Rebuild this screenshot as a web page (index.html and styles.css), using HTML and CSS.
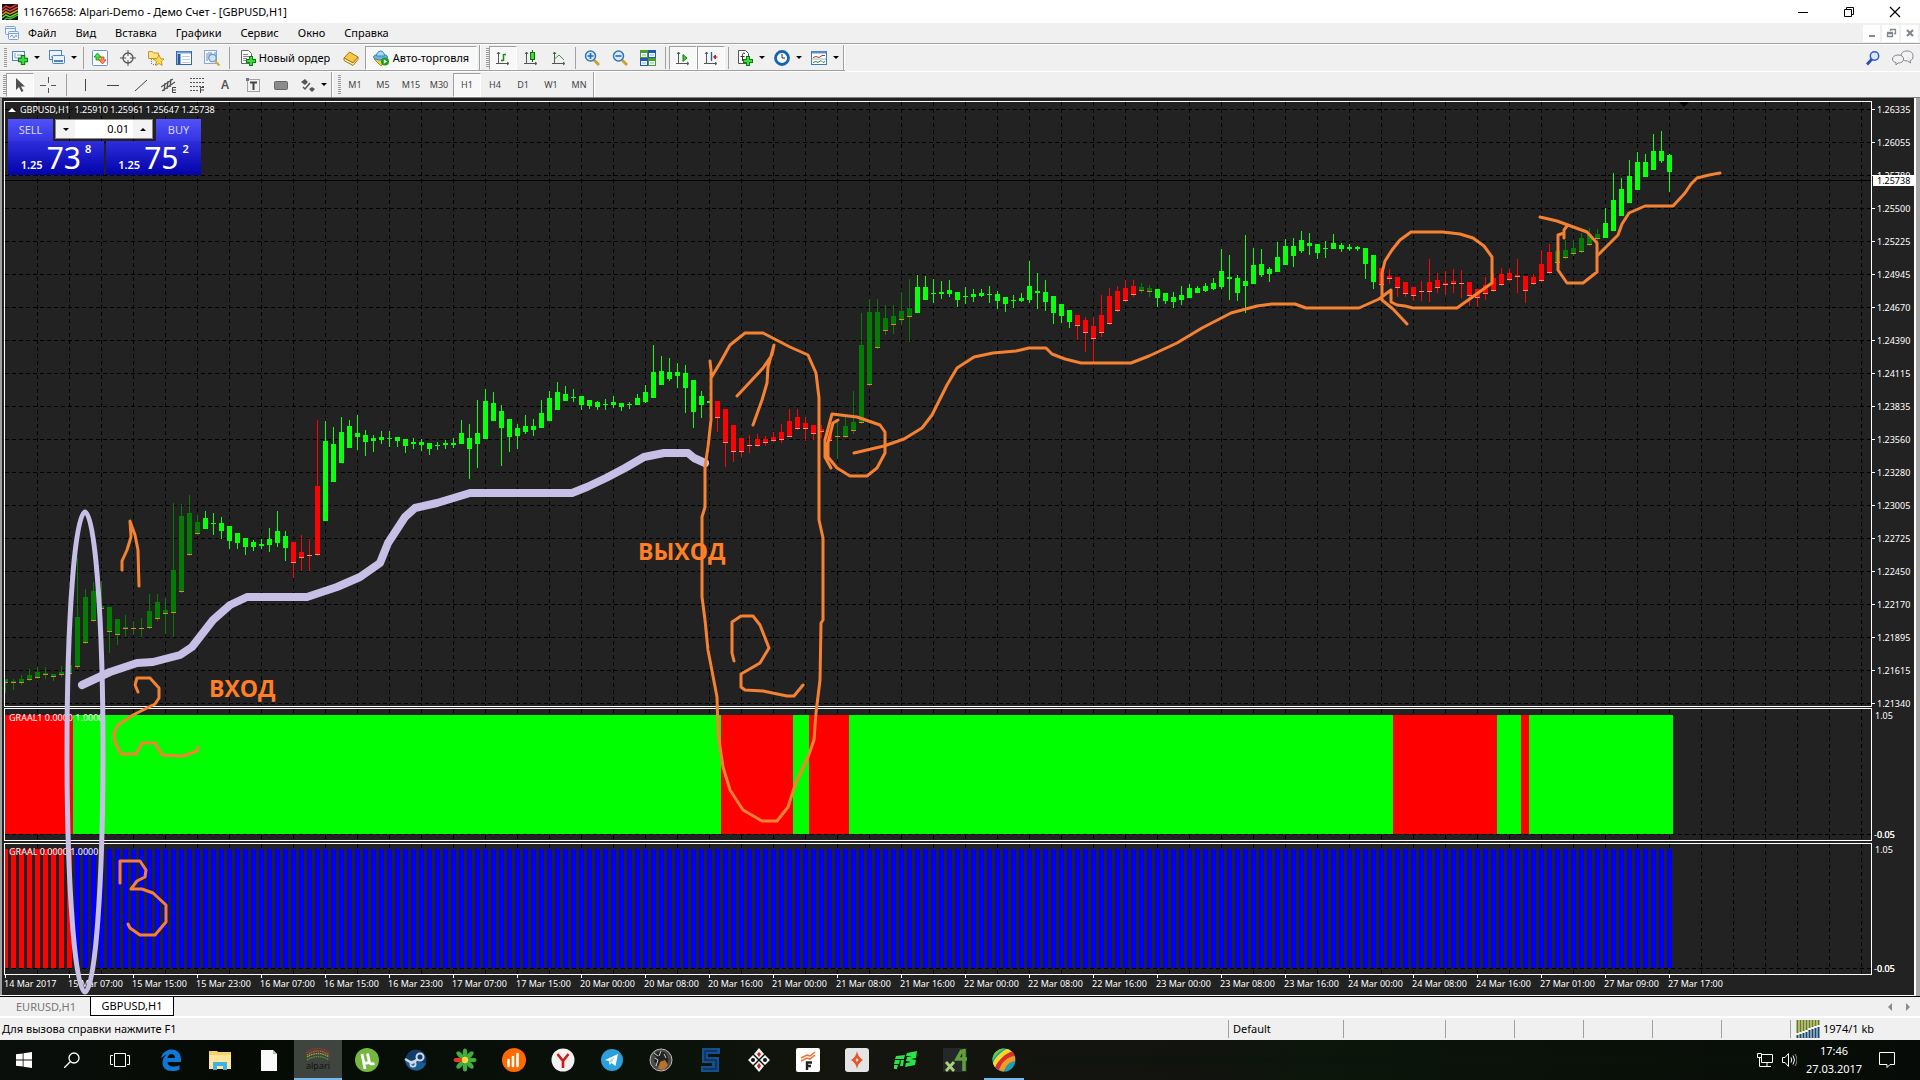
FILE: index.html
```html
<!DOCTYPE html>
<html lang="ru">
<head>
<meta charset="utf-8">
<title>11676658: Alpari-Demo - Демо Счет - [GBPUSD,H1]</title>
<link rel="stylesheet" href="styles.css">
</head>
<body>
<div class="app">
  <header class="titlebar">
    <svg class="ic" viewBox="0 0 16 16"><rect width="16" height="16" fill="#111"/><g fill="none" stroke-width="1.5"><path d="M0 5l4-3 4 2 4-2 4-2" stroke="#c33"/><path d="M0 8l4-3 4 2 4-2 4-2" stroke="#d44"/><path d="M0 11l4-3 4 2 4-2 4-2" stroke="#c90"/><path d="M0 14l4-3 4 2 4-2 4-2" stroke="#6c3"/><path d="M2 16l3-2 3 1 4-2 4-2" stroke="#3b3"/></g></svg>
    <h1 class="title">11676658: Alpari-Demo - Демо Счет - [GBPUSD,H1]</h1>
    <div class="winbtns">
      <button class="winbtn" aria-label="Свернуть"><svg class="ic" viewBox="0 0 16 16"><path d="M3 8.500h10" stroke="#000"/></svg></button>
      <button class="winbtn" aria-label="Развернуть"><svg class="ic" viewBox="0 0 16 16"><path d="M3.500 5.500h7v7h-7zM5.500 5V3.500h7v7H11" fill="none" stroke="#000"/></svg></button>
      <button class="winbtn" aria-label="Закрыть"><svg class="ic" viewBox="0 0 16 16"><path d="M3 3l10 10M13 3L3 13" stroke="#000" stroke-width="1.200"/></svg></button>
    </div>
  </header>

  <nav class="menubar">
    <svg class="ic" viewBox="0 0 16 16"><g fill="#eef5fd" stroke="#7fa3cc"><rect x="1.500" y="1.500" width="10" height="8" rx="1"/><path d="M2 3.500h9"/><rect x="4.500" y="6.500" width="10" height="8" rx="1"/><path d="M5 8.500h9M6 12l2-2 2 3 2-3 1 2"/></g></svg>
    <a href="#">Файл</a><a href="#">Вид</a><a href="#">Вставка</a><a href="#">Графики</a><a href="#">Сервис</a><a href="#">Окно</a><a href="#">Справка</a>
    <div class="mdibtns">
      <button class="mdibtn" aria-label="Свернуть окно"><svg class="ic" viewBox="0 0 16 16"><path d="M5 11h6" stroke="#7d8894" stroke-width="2"/></svg></button>
      <button class="mdibtn" aria-label="Восстановить окно"><svg class="ic" viewBox="0 0 16 16"><path d="M4.500 8.500h5v3h-5zM4 7.500h6M7.500 6V4.500h5v4H11M7 4.500h6" fill="none" stroke="#7d8894" stroke-width="1.300"/></svg></button>
      <button class="mdibtn" aria-label="Закрыть окно"><svg class="ic" viewBox="0 0 16 16"><path d="M5 5l6 6M11 5l-6 6" stroke="#7d8894" stroke-width="2.200"/></svg></button>
    </div>
  </nav>

  <div class="toolrow">
    <div class="toolbar upper">
      <span class="grip"></span>
      <button class="tool split" aria-label="Новый график"><svg class="ic" viewBox="0 0 16 16"><rect x=".5" y="1.500" width="12" height="9" fill="#f4f9fe" stroke="#4f83b9"/><path d="M3 3v5h7M5 5h5" stroke="#7ea5cd" fill="none"/><path d="M11 5v10M6 10h10" stroke="#0b7a12" stroke-width="4.500"/><path d="M11 6v8M7 10h8" stroke="#3bdc3b" stroke-width="2.500"/></svg><i class="drop"></i></button>
      <button class="tool split" aria-label="Профили"><svg class="ic" viewBox="0 0 16 16"><g fill="#eaf3fc" stroke="#4f83b9"><rect x=".5" y=".5" width="12" height="9"/><path d="M2 7h10"/><rect x="3.500" y="5.500" width="12" height="8" rx="1"/><path d="M5 11h9" stroke-width="2"/></g></svg><i class="drop"></i></button>
      <span class="sep thin"></span>
      <button class="tool" aria-label="Обзор рынка"><svg class="ic" viewBox="0 0 16 16"><rect x=".5" y=".5" width="15" height="15" rx="1" fill="#fff" stroke="#6b9ac9"/><path d="M5.500 3L9 7H7v3H4V7H2z" fill="#4ae04a" stroke="#138a13" stroke-width=".8"/><path d="M10.500 14L14 10h-2V7H9v3H7z" fill="#ff9050" stroke="#d24010" stroke-width=".8"/></svg></button>
      <button class="tool" aria-label="Окно данных"><svg class="ic" viewBox="0 0 16 16"><circle cx="8" cy="8" r="5" fill="none" stroke="#555" stroke-width="1.300"/><path d="M8 0v6M8 10v6M0 8h6M10 8h6" stroke="#555"/></svg></button>
      <button class="tool" aria-label="Навигатор"><svg class="ic" viewBox="0 0 16 16"><path d="M.5 8.500v-7h4l1 1.500h5v5.500z" fill="#ffe187" stroke="#c59a27"/><path d="M3.500 9v6M5 14.500h3" stroke="#777" stroke-dasharray="1 1"/><path d="M11 5l1.600 3.600 3.400.4-2.600 2.500.8 4-3.200-2-3.200 2 .8-4L5 9l4-.4z" fill="#ffd84a" stroke="#b98a12" stroke-width=".8"/></svg></button>
      <button class="tool" aria-label="Терминал"><svg class="ic" viewBox="0 0 16 16"><rect x=".5" y="1.500" width="15" height="13" fill="#fff" stroke="#33689f"/><path d="M1 2.500h14" stroke="#6fa0d4" stroke-width="2"/><path d="M3 4v10" stroke="#1f5aa5" stroke-width="3"/><path d="M6 6.500h8M6 9.500h8M6 12.500h8" stroke="#b9cfe6"/></svg></button>
      <button class="tool" aria-label="Тестер стратегий"><svg class="ic" viewBox="0 0 16 16"><rect x=".5" y=".5" width="12" height="13" fill="#f4f8fd" stroke="#86aad0"/><path d="M3 11V3M5 9V2M7 5V2M11 8V2" stroke="#6c8fb5"/><circle cx="8.500" cy="8" r="3.700" fill="#cfe4f8" stroke="#6a94c0" stroke-width="1.200"/><path d="M11 11l4.500 4.500" stroke="#d8a930" stroke-width="2.200"/></svg></button>
      <span class="sep"></span>
      <button class="tool order"><svg class="ic" viewBox="0 0 16 16"><path d="M1.500.5h7l3 3v10h-10z" fill="#fff" stroke="#666"/><path d="M3 4.500h5M3 6.500h7M3 8.500h4M3 10.500h3" stroke="#888"/><path d="M11 6v10M6 11h10" stroke="#0b7a12" stroke-width="4"/><path d="M11 7v8M7 11h8" stroke="#3bdc3b" stroke-width="2.200"/></svg>Новый ордер</button>
      <button class="tool" aria-label="MetaEditor"><svg class="ic" viewBox="0 0 16 16"><path d="M6.500 2L15 7l-5 6-9-5z" fill="#f5c945" stroke="#a87410"/><path d="M1 8l9 5 5-6v2.500L10 15.500 1 10.500z" fill="#fff3c0" stroke="#a87410"/></svg></button>
      <button class="tool pressed auto"><svg class="ic" viewBox="0 0 16 16"><path d="M1 9h13l-6 7z" fill="#f0cc50" stroke="#b58f20"/><ellipse cx="7.500" cy="7" rx="7" ry="3" fill="#6bb5e0" stroke="#3b84b5"/><path d="M3.500 6a4 5 0 0 1 8 0z" fill="#a6d8f2" stroke="#3b84b5"/><circle cx="12" cy="11.500" r="4" fill="#18a018"/><path d="M10.800 9.300l3.400 2.200-3.400 2.200z" fill="#fff"/></svg>Авто-торговля</button>
      <span class="edge"></span>
      <span class="grip"></span>
      <button class="tool pressed" aria-label="Бары"><svg class="ic" viewBox="0 0 16 16"><path d="M3.500 2v12M1 13.500h12M2 4l1.500-2L5 4M12 12l2 1.500-2 1.500" stroke="#555" fill="none"/><path d="M8.500 4v7M8.500 4.500H11M6 10.500h2.500" stroke="#159015" stroke-width="1.500"/></svg></button>
      <button class="tool" aria-label="Японские свечи"><svg class="ic" viewBox="0 0 16 16"><path d="M3.500 2v12M1 13.500h12M2 4l1.500-2L5 4M12 12l2 1.500-2 1.500" stroke="#555" fill="none"/><path d="M9.500 0v12" stroke="#107010"/><rect x="7.500" y="2.500" width="4" height="7" fill="#39e039" stroke="#107010"/></svg></button>
      <button class="tool" aria-label="Линия"><svg class="ic" viewBox="0 0 16 16"><path d="M3.500 2v12M1 13.500h12M2 4l1.500-2L5 4M12 12l2 1.500-2 1.500" stroke="#555" fill="none"/><path d="M3.500 9L8 5l5 5" stroke="#469146" fill="none"/></svg></button>
      <span class="sep thin"></span>
      <button class="tool" aria-label="Увеличить"><svg class="ic" viewBox="0 0 16 16"><path d="M10 10l5 5" stroke="#cda02c" stroke-width="2.800"/><circle cx="6.500" cy="6" r="5" fill="#d9ecfb" stroke="#3374b8" stroke-width="1.500"/><path d="M3.500 6h6M6.500 3v6" stroke="#1f6cc0" stroke-width="1.600"/></svg></button>
      <button class="tool" aria-label="Уменьшить"><svg class="ic" viewBox="0 0 16 16"><path d="M10 10l5 5" stroke="#cda02c" stroke-width="2.800"/><circle cx="6.500" cy="6" r="5" fill="#d9ecfb" stroke="#3374b8" stroke-width="1.500"/><path d="M3.500 6h6" stroke="#1f6cc0" stroke-width="1.600"/></svg></button>
      <button class="tool" aria-label="Расположить окна"><svg class="ic" viewBox="0 0 16 16"><path d="M0 0h8v8H0zM8 8h8v8H8z" fill="#46a028"/><path d="M8 0h8v8H8zM0 8h8v8H0z" fill="#2456b8"/><path d="M1 3h6v4H1zM9 3h6v4H9zM1 11h6v4H1zM9 11h6v4H9z" fill="#f4f8ff"/><path d="M2 5h4M10 5h4M2 13h4M10 13h4" stroke="#8ab0c8"/></svg></button>
      <span class="sep"></span>
      <button class="tool pressed" aria-label="Автопрокрутка"><svg class="ic" viewBox="0 0 16 16"><path d="M3.500 2v12M1 13.500h12M2 4l1.500-2L5 4M12 12l2 1.500-2 1.500" stroke="#555" fill="none"/><path d="M8 4.500l4 3.500-4 3.500z" fill="#4c4" stroke="#178017"/></svg></button>
      <button class="tool pressed" aria-label="Сдвиг графика"><svg class="ic" viewBox="0 0 16 16"><path d="M3.500 2v12M1 13.500h12M2 4l1.500-2L5 4M12 12l2 1.500-2 1.500" stroke="#555" fill="none"/><path d="M8.500 2v9" stroke="#25629c" stroke-width="1.400"/><path d="M14.500 7H11M12.500 5l-2 2 2 2z" fill="#b22" stroke="#b22"/></svg></button>
      <span class="sep"></span>
      <button class="tool split" aria-label="Индикаторы"><svg class="ic" viewBox="0 0 16 16"><path d="M1.500.5h7l3 3v10h-10z" fill="#fff" stroke="#555"/><path d="M8 3.500c-2-1-2.500 0-2.500 2V11M3.500 6.500h4" stroke="#333" fill="none"/><path d="M11 6v10M6 11h10" stroke="#0b7a12" stroke-width="4"/><path d="M11 7v8M7 11h8" stroke="#3bdc3b" stroke-width="2.200"/></svg><i class="drop"></i></button>
      <button class="tool split" aria-label="Периоды"><svg class="ic" viewBox="0 0 16 16"><circle cx="8" cy="8" r="6.500" fill="#f4faff" stroke="#1764ae" stroke-width="2.800"/><path d="M8 4v4h3" stroke="#333" fill="none"/></svg><i class="drop"></i></button>
      <button class="tool split" aria-label="Шаблоны"><svg class="ic" viewBox="0 0 16 16"><rect x=".5" y="1.500" width="15" height="13" fill="#fff" stroke="#3f78b0"/><path d="M1 2.500h14" stroke="#5a93cc" stroke-width="2"/><path d="M2 7.500l3-1 3 1 3-2 3 0" stroke="#a33" fill="none"/><path d="M1 9h14" stroke="#9bb"/><path d="M2 12.500l3-1 2 1 3-2 2 2 2-1" stroke="#2a8a3a" fill="none"/></svg><i class="drop"></i></button>
      <span class="edge"></span>
    </div>
    <div class="tray-tools">
      <button class="tool" aria-label="Поиск"><svg class="ic" viewBox="0 0 16 16"><path d="M7 9l-5 5.500" stroke="#2451b5" stroke-width="2.800"/><circle cx="9.500" cy="6" r="4.200" fill="#dbe8fb" stroke="#2c5cc4" stroke-width="1.500"/></svg></button>
      <button class="tool chat" aria-label="Чат"><svg class="icw" viewBox="0 0 22 16"><g fill="#f2f2f4" stroke="#85858c"><path d="M15 1c4 0 6 2 6 5s-1 4-3 4.500l.5 2.500-3-2c-4 0-6.500-2-6.500-5s2-5 6-5z"/><path d="M6 5c3.500 0 5.500 1.500 5.500 4S9.500 13 6 13l-2 2v-2.500C1.500 12 .5 11 .5 9S2.500 5 6 5z"/></g></svg></button>
    </div>
  </div>

  <div class="toolrow short">
    <div class="toolbar lower">
      <span class="grip"></span>
      <button class="tool pressed" aria-label="Курсор"><svg class="ic" viewBox="0 0 16 16"><path d="M4 1v12l3-3 2.500 5 2-1L9 9.500h4z" fill="#505050"/></svg></button>
      <button class="tool" aria-label="Перекрестие"><svg class="ic" viewBox="0 0 16 16"><path d="M8.500 0v6M8.500 11v5M0 8.500h6M11 8.500h5" stroke="#555"/></svg></button>
      <span class="sep"></span>
      <button class="tool" aria-label="Вертикальная линия"><svg class="ic" viewBox="0 0 16 16"><path d="M8.500 2v12" stroke="#444"/></svg></button>
      <button class="tool" aria-label="Горизонтальная линия"><svg class="ic" viewBox="0 0 16 16"><path d="M2 8.500h12" stroke="#444"/></svg></button>
      <button class="tool" aria-label="Трендовая линия"><svg class="ic" viewBox="0 0 16 16"><path d="M2 14L14 3" stroke="#444"/></svg></button>
      <button class="tool" aria-label="Канал"><svg class="ic" viewBox="0 0 16 16"><path d="M0 10L12 2M1 14L14 5M4 6l-1 8M7 4L6 12M10 2L9 10" stroke="#555" stroke-width="1.300"/><path d="M15 10.500h-3.500v5H15M12 13h3" stroke="#444" fill="none"/></svg></button>
      <button class="tool" aria-label="Фибоначчи"><svg class="ic" viewBox="0 0 16 16"><path d="M1 1.500h14M1 5.500h14M1 9.500h14M1 13.500h8" stroke="#555" stroke-dasharray="2 1"/><path d="M15 10.500h-3.500V16M12 13h3" stroke="#444" fill="none"/></svg></button>
      <button class="tool glyph">A</button>
      <button class="tool" aria-label="Текстовая метка"><svg class="ic" viewBox="0 0 16 16"><rect x="2.500" y="2.500" width="12" height="12" fill="none" stroke="#555" stroke-dasharray="1 1"/><path d="M1 1h3v3H1z" fill="#777"/><path d="M5 5.500h7M8.500 5v8" stroke="#444" stroke-width="2"/></svg></button>
      <button class="tool" aria-label="Фигуры"><svg class="ic" viewBox="0 0 16 16"><rect x="1.500" y="4.500" width="13" height="8" rx="1" fill="#8b8b8b" stroke="#666"/></svg></button>
      <button class="tool arrows" aria-label="Стрелки"><svg class="ic" viewBox="0 0 16 16"><path d="M1 5l4-3 3 3-3 3zM9 12l3-2 3 2-3 3z" fill="#555"/><path d="M3 10l2 2 5-6" stroke="#555" stroke-width="1.500" fill="none"/></svg><i class="drop"></i></button>
      <span class="edge"></span>
      <span class="grip"></span>
      <button class="tool tf">M1</button><button class="tool tf">M5</button><button class="tool tf">M15</button><button class="tool tf">M30</button><button class="tool tf pressed">H1</button><button class="tool tf">H4</button><button class="tool tf">D1</button><button class="tool tf">W1</button><button class="tool tf">MN</button>
      <span class="edge"></span>
    </div>
  </div>

  <main class="chart">
    <svg id="plot" class="plot" viewBox="0 97 1920 900" preserveAspectRatio="xMinYMin meet" role="img" aria-label="GBPUSD,H1"></svg>
    <section class="ticket" aria-label="Торговля одним кликом">
      <button class="quote sell"><span class="side">SELL</span><span class="price"><small>1.25</small><big>73</big><sup>8</sup></span></button>
      <button class="quote buy"><span class="side">BUY</span><span class="price"><small>1.25</small><big>75</big><sup>2</sup></span></button>
      <div class="volume">
        <button class="step" aria-label="Меньше"><i class="drop"></i></button>
        <input class="lots" aria-label="Объем" value="0.01">
        <button class="step" aria-label="Больше"><i class="drop up"></i></button>
      </div>
    </section>
  </main>

  <div class="tabs">
    <button class="tab">EURUSD,H1</button>
    <button class="tab active">GBPUSD,H1</button>
    <div class="scrollers">
      <button class="scroller" aria-label="Влево"><svg viewBox="0 0 8 10"><path d="M6 1v8L2 5z" fill="#8b8b8b"/></svg></button>
      <button class="scroller" aria-label="Вправо"><svg viewBox="0 0 8 10"><path d="M2 1v8l4-4z" fill="#8b8b8b"/></svg></button>
    </div>
  </div>

  <footer class="status">
    <span class="hint">Для вызова справки нажмите F1</span>
    <span class="cell c-profile">Default</span>
    <span class="cell c-wide"></span>
    <span class="cell"></span>
    <span class="cell"></span>
    <span class="cell"></span>
    <span class="cell"></span>
    <span class="cell"></span>
    <span class="cell c-net"><svg class="net" viewBox="0 0 24 18"><path d="M1.500 0v13M4.500 0v12M7.500 0v11M10.500 0v10M13.500 0v8M16.500 0v7M19.500 0v6M22.500 0v5" stroke="#6b7d10" stroke-width="2"/><path d="M1.500 15v3M4.500 14v4M7.500 13v5M10.500 12v6M13.500 10v8M16.500 9v9M19.500 8v10M22.500 7v11" stroke="#17486e" stroke-width="2"/></svg>1974/1 kb</span>
  </footer>

  <div class="taskbar">
    <div class="system">
      <button class="task" aria-label="Пуск"><svg class="ic" viewBox="0 0 16 16"><path d="M0 2.300L6.700 1.400v6.200H0zM7.500 1.300L16 0v7.600H7.500zM0 8.400h6.700v6.200L0 13.700zM7.500 8.400H16V16l-8.500-1.200z" fill="#fff"/></svg></button>
      <button class="task" aria-label="Поиск"><svg class="ic" viewBox="0 0 16 16"><circle cx="10" cy="6" r="5" fill="none" stroke="#fff" stroke-width="1.300"/><path d="M6.500 9.500L0 16" stroke="#fff" stroke-width="1.300"/></svg></button>
      <button class="task" aria-label="Представление задач"><svg class="icw" viewBox="0 0 20 16"><path d="M4.500 1.500h11v13h-11zM3 3.500H.5v9H3M17 3.500h2.500v9H17" fill="none" stroke="#fff"/></svg></button>
    </div>
    <div class="apps">
      <button class="task" aria-label="Edge"><svg class="big" viewBox="0 0 24 24"><path d="M2 11C3 4 8 1.500 12.500 1.500 19 1.500 22 6 22 11v3H8.500c.3 3.500 3 4.500 6 4.500 2.500 0 4.500-.5 6-1.500v4.500c-2 1-4.500 1.500-7.500 1.500-6 0-9.500-3.500-9.500-8.500 0-3.500 1.500-6 4.500-8C5 7.500 3 9 2 11zm6.500-1h7.500c0-2.500-1.500-4-3.500-4s-3.500 1.500-4 4z" fill="#0f78d4"/></svg></button>
      <button class="task" aria-label="Проводник"><svg class="big" viewBox="0 0 24 24"><path d="M1 4V3h8l1 1h13v17H1z" fill="#f5d06c"/><path d="M1 7h22v14H1z" fill="#ffe69a"/><path d="M5 22v-8h14v8h-4v-4H9v4z" fill="#3fb0e8"/></svg></button>
      <button class="task" aria-label="Документ"><svg class="big" viewBox="0 0 24 24"><path d="M4 2h12l4 4v17H4z" fill="#fafafa"/><path d="M16 2v4h4z" fill="#bbb"/></svg></button>
      <button class="task current" aria-label="Alpari"><svg class="brand" viewBox="0 0 24 14"><g fill="none" stroke-width="1.300" stroke-dasharray="1.500 .8"><path d="M0 6Q12-3 24 6" stroke="#a33"/><path d="M1 8Q12 0 23 8" stroke="#b63"/><path d="M1 10Q12 3 23 10" stroke="#aa3"/><path d="M1 13Q12 6 23 13" stroke="#593"/></g></svg><span class="brandname">alpari</span></button>
      <button class="task" aria-label="uTorrent"><svg class="big" viewBox="0 0 24 24"><circle cx="12" cy="12" r="12" fill="#76b83f"/><path d="M7 6l3 15M8.500 13c.6 3 5.500 3 5.500-.5L12.500 5.500M14 13c.5 3 2.500 3.500 5.500 2.500" fill="none" stroke="#fff" stroke-width="2.800"/></svg></button>
      <button class="task" aria-label="Steam"><svg class="big" viewBox="0 0 24 24"><circle cx="12" cy="12" r="10.500" fill="#123c6b"/><path d="M1 13c1 5 5 9 11 9.500 4 0 8-2 10-7L12 13z" fill="#1b5c95"/><circle cx="16" cy="9" r="3.500" fill="none" stroke="#cfd8e2" stroke-width="2"/><circle cx="9" cy="16" r="2.600" fill="none" stroke="#cfd8e2" stroke-width="1.800"/><path d="M1 11l7 4 6-4" stroke="#cfd8e2" stroke-width="2.500" fill="none"/></svg></button>
      <button class="task" aria-label="ICQ"><svg class="big" viewBox="0 0 24 24"><g fill="#3fae3f"><ellipse cx="12" cy="5" rx="2.300" ry="4.500"/><ellipse cx="12" cy="19" rx="2.300" ry="4.500"/><ellipse cx="19" cy="12" rx="4.500" ry="2.300"/><ellipse cx="17" cy="7" rx="4.500" ry="2.300" transform="rotate(-45 17 7)"/><ellipse cx="7" cy="7" rx="4.500" ry="2.300" transform="rotate(45 7 7)"/><ellipse cx="17" cy="17" rx="4.500" ry="2.300" transform="rotate(45 17 17)"/><ellipse cx="7" cy="17" rx="4.500" ry="2.300" transform="rotate(-45 7 17)"/></g><ellipse cx="5" cy="12" rx="4.500" ry="2.300" fill="#e03a2a"/><circle cx="12" cy="12" r="3.200" fill="#ffd93c"/></svg></button>
      <button class="task" aria-label="Статистика"><svg class="big" viewBox="0 0 24 24"><circle cx="12" cy="12" r="12" fill="#ff6a00"/><path d="M6.500 18v-6M11 18V9M15.500 18V6" stroke="#fff" stroke-width="2.600" stroke-linecap="round"/></svg></button>
      <button class="task" aria-label="Yandex"><svg class="big" viewBox="0 0 24 24"><circle cx="12" cy="12" r="11.500" fill="#f4f2f0"/><path d="M6.500 6L12 13l5.500-7M12 13v7" fill="none" stroke="#d01818" stroke-width="2.600"/></svg></button>
      <button class="task" aria-label="Telegram"><svg class="big" viewBox="0 0 24 24"><circle cx="12" cy="12" r="11" fill="#2ba0da"/><path d="M5 12l13-6-2.500 12-4-3-2 2-.5-4z" fill="#fff"/><path d="M9 13l6-4-4 6z" fill="#a8d0e8"/></svg></button>
      <button class="task" aria-label="Игра"><svg class="big" viewBox="0 0 24 24"><circle cx="12" cy="12" r="11" fill="#4c4a48" stroke="#bbb"/><path d="M5 7c3-5 10-5 13 0 2 4 2 8-2 11l-3-6-4 6-4-5 2-4z" fill="#222"/><path d="M11 14l5-2 3 5-4 5-6-1z" fill="#b8722c"/><path d="M6 10l3 2-2 6M12 3l-2 5M5 5l4 3M15 6l2 4" stroke="#ccc" fill="none"/></svg></button>
      <button class="task" aria-label="S"><svg class="big" viewBox="0 0 24 24"><path d="M4 0h18v6H10v3h11v15H3v-6h11v-3H4z" fill="#14508c"/><path d="M7 3h12M7 3v9h11v9H5" stroke="#0a2f5c" stroke-width="1.500" fill="none"/></svg></button>
      <button class="task" aria-label="Карты"><svg class="big" viewBox="0 0 24 24"><g fill="#f4f4f4"><path d="M12 0l5 6-5 5-5-5zM12 13l5 5-5 6-5-6zM6 7l5 5-5 5-5-5zM18 7l5 5-5 5-5-5z"/></g><path d="M12 4l2 2-2 3-2-3zM12 15l2 3-2 3-2-3z" fill="#c22"/><circle cx="6" cy="12" r="2" fill="#111"/><circle cx="18" cy="12" r="2" fill="#111"/></svg></button>
      <button class="task" aria-label="F"><svg class="big" viewBox="0 0 24 24"><rect width="24" height="24" rx="2" fill="#fff"/><path d="M5 10l6-3 3 1 5-4M5 13l6-3 3 1 5-4" fill="none" stroke="#e8743a" stroke-width="1.600"/><path d="M11 22v-7.500h5M11 18h4" fill="none" stroke="#222" stroke-width="2.400"/></svg></button>
      <button class="task" aria-label="Ромб"><svg class="big" viewBox="0 0 24 24"><rect width="24" height="24" rx="3" fill="#e4e4e4"/><path d="M12 3c1 5 3 7 6 9-3 2-5 4-6 9-1-5-3-7-6-9 3-2 5-4 6-9z" fill="#e2562a"/><path d="M12 10l1.500 2-1.500 2-1.500-2z" fill="#fbe3d8"/></svg></button>
      <button class="task" aria-label="FL"><svg class="big" viewBox="0 0 24 24"><path d="M2 8l9-1-1 4H1zM1 12h5l-1 4H0zM0 17h4l-1 4H0zM7 12h3l-1 6H6zM13 5l10-2-1 7-5 1 5 1-1 5-10 2 1-4 5-1-5-1 1-4 5-1h-6z" fill="#2ee04a"/></svg></button>
      <button class="task" aria-label="X4"><svg class="big" viewBox="0 0 24 24"><rect width="24" height="24" fill="#25282a"/><path d="M3 14l8 9M11 14l-8 9" stroke="#a9d27a" stroke-width="2.800"/><path d="M21 1v22M19 2l-5 9h10" stroke="#5fa03a" stroke-width="3.500" fill="none"/></svg></button>
      <button class="task running" aria-label="Paint"><svg class="big" viewBox="0 0 24 24"><defs><clipPath id="ball"><circle cx="12" cy="12" r="11.500"/></clipPath></defs><g clip-path="url(#ball)"><rect width="24" height="24" fill="#1d9fb5"/><path d="M0 14C2 8 8 2 14 0H0z" fill="#7cc52e"/><path d="M0 18C2 10 9 3 17 0l4 3C13 6 6 12 3 20z" fill="#f5dc20"/><path d="M3 20C6 12 13 6 21 3l2 5c-8 1-13 6-16 14z" fill="#e22b26"/><path d="M7 22c3-8 8-13 16-14v5c-6 1-10 5-11 11z" fill="#f59a20"/></g></svg></button>
    </div>
    <div class="notify">
      <svg class="ic" viewBox="0 0 16 16"><path d="M4.500 2.500h11v8h-11zM10 11v3M6 14.500h8M.5 1.500h4v4h-4zM2.500 6v8.500H6" fill="none" stroke="#fff"/></svg>
      <svg class="ic" viewBox="0 0 16 16"><path d="M1.500 5.500H4l3.500-4v13L4 10.500H1.500zM10 5.500q1.500 2.500 0 5M12 3.500q3 4.500 0 9" fill="none" stroke="#fff"/><path d="M14 2q4 6 0 12" fill="none" stroke="#888"/></svg>
      <time class="clock"><span>17:46</span><span>27.03.2017</span></time>
      <button class="center" aria-label="Центр уведомлений"><svg class="ic" viewBox="0 0 16 16"><path d="M.5.5h15v12H11l-3 3v-3H.5z" fill="none" stroke="#fff"/></svg></button>
    </div>
  </div>
</div>
<script src="chart.js"></script>
</body>
</html>
```
FILE: styles.css
```css
* { box-sizing: border-box; }
body {
  margin: 0;
  background: #000;
  color: #000;
  font: 11px/16px "Noto Sans", "Open Sans", sans-serif;
}
h1 { margin: 0; font-weight: 400; }
button, input { margin: 0; padding: 0; border: 0; background: none; color: inherit; font: inherit; }
a { color: inherit; text-decoration: none; }

.app { display: flex; flex-direction: column; min-height: 100vh; background: #f0f0f0; }
.ic { display: block; width: 16px; height: 16px; flex: none; }
.icw { display: block; width: 22px; height: 16px; flex: none; }
.big { display: block; width: 24px; height: 24px; }

.titlebar { display: flex; align-items: center; gap: 5px; height: 23px; padding-left: 2px; background: #fff; }
.title { flex: 1; font-size: 11px; line-height: 16px; }
.winbtns { display: flex; }
.winbtn { display: flex; justify-content: center; width: 46px; }
.winbtn:last-child { width: 48px; padding-right: 2px; }

.menubar { display: flex; align-items: center; gap: 19px; height: 21px; padding: 0 2px 0 4px; border-bottom: 1px solid #a0a0a0; }
.menubar > .ic { margin-right: -11px; }
.mdibtns { display: flex; gap: 2px; margin-left: auto; }
.mdibtn { display: flex; align-items: center; justify-content: center; width: 17px; height: 17px; background: #fff; }

.toolrow { display: flex; justify-content: space-between; height: 27px; border-top: 1px solid #fff; }
.short { height: 26px; }
.toolbar { display: flex; align-items: center; }
.upper { padding-left: 4px; border-bottom: 1px solid #a0a0a0; }
.lower { padding-left: 3px; }
.grip { width: 3px; height: 20px; background: repeating-linear-gradient(#999 0 1px, #f0f0f0 1px 2px); }
.sep { width: 7px; height: 22px; background: linear-gradient(#a0a0a0, #a0a0a0) center / 1px 100% no-repeat; }
.thin { width: 5px; }
.lower .sep { width: 9px; }
.edge { align-self: stretch; width: 2px; margin-right: 5px; border-left: 1px solid #a0a0a0; background: #fff; }
.edge:last-child { margin-right: 0; }
.tool { display: flex; align-items: center; justify-content: center; width: 28px; height: 24px; flex: none; }
.split { width: 37px; gap: 6px; }
.order { width: 104px; gap: 3px; white-space: nowrap; }
.auto { width: 112px; gap: 4px; margin-right: 2px; white-space: nowrap; }
.pressed { border: 1px solid; border-color: #a0a0a0 #fff #fff #a0a0a0; background: #f8f8f8; }
.drop { width: 0; height: 0; border: 3px solid transparent; border-top-color: #000; border-bottom: 0; }
.up { border-top: 0; border-bottom: 3px solid #000; }
.glyph { color: #555; font-size: 12px; font-weight: 600; }
.arrows { width: 36px; gap: 5px; }
.tf { color: #444; font-size: 9px; }
.tray-tools { display: flex; gap: 2px; align-items: center; padding-right: 3px; }

.chart { position: relative; flex: 1; background: #222; }
.plot { display: block; width: 100%; height: auto; }
.axis { fill: #fff; font: 9px "Noto Sans", sans-serif; }
.now { fill: #000; }
.note { fill: #ff7f27; font: 700 23px "Open Sans", "Noto Sans", sans-serif; }
.pen { fill: none; stroke: #f58233; stroke-width: 3; stroke-linecap: round; stroke-linejoin: round; }
.marker { fill: none; stroke: #c8bfe7; stroke-width: 8; stroke-linecap: round; stroke-linejoin: round; }
.ring { stroke-width: 5; }

.ticket { position: absolute; left: 8px; top: 22px; display: grid; grid-template-columns: 96px 95px; gap: 2px; color: #fff; }
.quote { display: flex; flex-direction: column; text-align: left; }
.buy { align-items: flex-end; }
.side { width: 45px; height: 22px; background: linear-gradient(#5252fb, #3333e0); color: #d5d9f5; font-size: 11px; line-height: 21px; text-align: center; }
.price { display: flex; align-items: flex-end; justify-content: center; width: 100%; height: 34px; background: linear-gradient(#2d2ddc, #0303aa); }
.price small { font-size: 11px; font-weight: 600; line-height: 20px; }
.price big { margin: 0 4px; font-size: 30px; line-height: 34px; }
.price sup { align-self: flex-start; font-size: 11px; font-weight: 600; line-height: 16px; }
.volume { position: absolute; left: 47px; top: 0; display: grid; grid-template-columns: 19px 1fr 19px; width: 98px; height: 20px; border: 1px solid #888; background: #fff; color: #000; }
.step { display: flex; align-items: center; justify-content: center; background: #f3f3f3; }
.lots { min-width: 0; padding-right: 4px; background: #fff; text-align: right; }

.tabs { display: flex; height: 21px; padding-left: 2px; border-bottom: 2px solid #fff; }
.tab { width: 88px; color: #777; }
.active { width: 84px; height: 19px; border: 1px solid #000; border-top: 0; background: #fff; color: #000; }
.scrollers { display: flex; align-items: center; gap: 10px; margin-left: auto; padding-right: 8px; }
.scroller { display: flex; width: 8px; height: 10px; }

.status { display: flex; align-items: center; height: 22px; font-size: 11px; }
.hint { flex: 1; padding-left: 2px; }
.cell { display: flex; align-items: center; width: 69px; height: 18px; border-left: 1px solid #a0a0a0; }
.c-profile { width: 115px; padding-left: 4px; }
.c-wide { width: 102px; }
.c-net { width: 130px; gap: 3px; padding-left: 5px; }
.net { width: 24px; height: 18px; }

.taskbar { display: flex; height: 40px; background: radial-gradient(ellipse at 70% 50%, #0b140b 0, transparent 25%), linear-gradient(90deg, #0b0f0b, #050a05 12%, #0a120a 35%, #15150f 45%, #12120f 62%, #0c160a 68%, #070b07); color: #fff; }
.system { display: flex; padding-right: 3px; }
.apps { display: flex; flex: 1; gap: 1px; }
.task { display: flex; flex-direction: column; align-items: center; justify-content: center; width: 48px; height: 40px; }
.current { background: #3f443f; border-bottom: 2px solid #76b9ed; }
.running { background: linear-gradient(#76b9ed, #76b9ed) bottom / 40px 2px no-repeat; }
.brand { width: 24px; height: 14px; }
.brandname { color: #111; font-size: 9px; line-height: 10px; }
.notify { display: flex; align-items: center; gap: 8px; padding-right: 25px; }
.clock { display: flex; flex-direction: column; width: 58px; text-align: center; line-height: 18px; }
.center { margin-left: 8px; }
```
FILE: chart.js
```js
const plot = document.getElementById('plot');
const NS = 'http://www.w3.org/2000/svg';

function add(name, attrs, text) {
  const el = document.createElementNS(NS, name);
  for (const key in attrs) el.setAttribute(key, attrs[key]);
  if (text) el.textContent = text;
  plot.appendChild(el);
  return el;
}
const box = (x, y, width, height, fill) =>
  add('rect', { x, y, width, height, fill, 'shape-rendering': 'crispEdges' });
const dash = (x1, y1, x2, y2) =>
  add('line', { x1, y1, x2, y2, stroke: '#000', 'stroke-dasharray': '4 3', 'shape-rendering': 'crispEdges' });

// Window frame
box(0, 97, 1920, 900, '#222');
box(0, 97, 2, 900, '#a0a0a0');
box(0, 97, 1920, 1, '#808080');
box(1914, 98, 2, 899, '#fff');
box(1916, 98, 4, 899, '#a8a8a8');

// Grid
for (let y = 109; y <= 703; y += 33) dash(5, y + .5, 1871, y + .5);
for (const y of [834, 968]) dash(5, y + .5, 1871, y + .5);
for (let x = 37; x < 1871; x += 32) {
  dash(x + .5, 102, x + .5, 706);
  dash(x + .5, 709, x + .5, 840);
  dash(x + .5, 844, x + .5, 974);
}
box(5, 180, 1866, 1, '#000');
add('path', { d: 'M1679 102h10l-5 5z', fill: '#000' });

// Candles: colour, high, body top, body bottom, low; values are thirds of a pixel below the block's base
const blocks = [
  [400, `d 838 838 850 878,d 838 844 848 870,d 826 838 848 855,d 808 824 840 844,d 802 816 835 838,d 802 820 826 836,d 822 822 832 842,d 798 816 826 832,d 785 795 822 828,d 475 652 802 806,d 566 590 728 732,d 545 573 662 666,d 542 618 626 630,d 621 621 697 758,d 657 657 706 736,d 645 682 688 712,d 662 684 687 705,d 654 684 687 712,d 582 633 684 686,d 582 605 658 662,d 594 630 643 702,d 308 510 638 712,d 312 348 575 578,d 286 340 465 468,d 346 366 402 405,g 333 354 387 387,g 340 369 372 405,g 352 369 393 417,g 378 378 423 446,g 399 399 429 448,g 414 414 441 466,g 420 426 440 453,g 418 433 437 446,g 384 417 435 457,g 333 393 429 440,g 393 408 444 484,r 426 426 488 533,r 405 456 473 512,r 418 464 468 513,r 60 258 465 468,g 64 123 363 363,g 82 132 245 245,g 52 96 189 190,g 60 78 144 144,g 46 99 111 150,g 90 105 126 168,g 106 114 123 157,g 93 111 120 132,g 94 114 118 141,g 111 111 123 141,g 117 117 138 159,g 114 127 131 147,g 117 126 135 153,g 129 129 147 165,g 126 134 138 150,g 121 129 136 147,g 115 129 135 145,g 60 99 131 132,g 72 114 147 237`],
  [340, `g 180 279 312 385,g 147 183 297 298,g 156 189 243 243,g 195 213 264 378,g 237 237 291 337,g 252 264 288 327,g 225 258 276 283,g 237 258 270 288,g 180 219 264 264,g 153 174 243 244,g 126 156 210 210,g 138 162 183 183,g 147 170 174 186,g 168 168 195 210,g 180 180 197 208,g 183 186 200 211,g 177 191 195 210,g 168 186 195 203,g 188 188 200 213,g 186 192 196 208,g 162 174 195 195,g 135 156 186 189,g 15 96 174 174,g 48 93 135 136,g 54 96 118 123,g 69 96 108 144,g 75 99 144 219,g 120 120 216 265,g 153 168 195 235,g 182 182 188 188,r 183 183 234 276,r 207 207 308 380,r 255 255 335 366,r 294 294 335 350,r 285 314 318 340,r 282 297 317 320,r 289 297 309 317,r 277 291 302 305,r 252 276 299 310,r 207 243 291 292,r 208 231 266 270,r 231 249 266 302,r 255 255 281 300,r 255 268 275 295,r 273 273 303 303,d 240 288 291 358,d 228 258 290 294,d 153 246 274 283`],
  [240, `d 218 315 548 552,d 177 216 434 438,d 177 216 325 328,d 196 234 272 284,d 195 228 254 282,d 157 213 241 256,d 117 204 230 305,g 105 141 219 219,g 108 141 180 180,g 117 158 162 190,g 123 156 161 177,g 120 150 161 171,g 156 156 180 201,g 141 167 171 192,g 147 162 171 187,g 147 159 168 170,g 139 161 165 190,g 153 162 183 206,g 171 171 192 215,g 165 179 183 203,g 160 174 183 187,g 63 138 180 188,g 99 153 158 207,g 121 156 186 212,g 168 168 219 253,g 192 192 228 249,g 210 210 246 264,r 225 225 258 299,r 230 240 278 335,r 231 258 297 370,r 165 225 278 292,r 145 168 251 254,r 137 153 213 215,r 121 144 183 186,r 121 138 164 170,d 129 141 152 158,d 134 144 155 170,g 147 147 174 200,g 159 159 183 192,g 156 171 186 203,g 138 165 180 195,g 132 144 174 174,g 138 144 159 160,g 129 138 153 156,g 114 129 147 150,g 27 93 141 148,g 45 111 116 180,g 105 114 159 182,g -15 123 138 220`],
  [210, `g 115 165 222 222,g 117 162 195 200,g 170 177 192 217,g 96 141 186 186,g 87 108 165 165,g 84 108 138 170,g 63 90 123 130,g 69 99 108 135,g 102 102 129 148,g 93 113 117 144,g 72 99 117 118,g 98 105 117 127,g 102 111 117 124,g 107 110 117 123,g 114 114 162 208,g 135 135 216 238`],
  [100, `r 505 505 556 556,r 507 528 536 553,r 531 531 563 592,r 546 546 581 590,r 561 561 587 602,r 542 573 576 604,r 476 546 576 605,r 519 540 564 578,r 513 550 554 585,r 508 543 551 578,r 510 548 552 593,r 546 546 587 617,r 567 567 594 620,r 530 555 582 600,r 520 534 573 576,r 503 522 555 558,r 507 519 539 542,r 476 526 530 578,r 528 528 572 608,r 522 531 551 555,r 450 492 543 545,r 432 456 518 522,d 454 454 488 488,d 420 450 473 476,d 420 444 461 468,d 400 414 455 458,d 383 402 434 438,d 388 402 417 422,g 325 369 413 413,g 220 300 392 392,g 234 267 348 348,g 180 228 309 309,g 156 186 270 270,g 163 186 231 231,g 102 153 210 210,g 93 153 183 188,g 162 165 216 276`]
];
const colours = { d: '#057a05', g: '#0cff0c', r: '#fa0505' };
let x = 5;
for (const [base, rows] of blocks) {
  for (const row of rows.split(',')) {
    const [kind, ...values] = row.split(' ');
    const [high, top, bottom, low] = values.map(v => Math.round(base + v / 3));
    const left = x === 5 ? 5 : x - 2;
    box(x, high, 1, Math.max(1, low - high), colours[kind]);
    box(left, top, x + 3 - left, Math.max(1, bottom - top), colours[kind]);
    if (kind !== 'g') box(left, bottom - 1, x + 3 - left, 1, kind === 'd' ? '#d08a35' : '#ff8a7a');
    x += 8;
  }
}

// GRAAL1: solid trend zones
const zones = [[5, 73, 'r'], [73, 721, 'g'], [721, 793, 'r'], [793, 809, 'g'], [809, 849, 'r'], [849, 1393, 'g'],
  [1393, 1497, 'r'], [1497, 1521, 'g'], [1521, 1529, 'r'], [1529, 1673, 'g']];
for (const [from, to, kind] of zones) box(from, 715, to - from, 119, kind === 'r' ? '#f00' : '#0f0');

// GRAAL: one stripe per bar
for (let i = 0; i < 209; i++) {
  const left = i ? 8 * i + 3 : 5;
  box(left, 849, 8 * i + 8 - left, 119, i < 9 ? '#fa0505' : '#0000f8');
}

// Panel borders
for (const [top, bottom] of [[101, 706], [708, 840], [843, 974]]) {
  box(4, top, 1868, 1, '#fff');
  box(4, bottom, 1868, 1, '#fff');
  box(4, top, 1, bottom - top, '#fff');
  box(1871, top, 1, bottom - top, '#fff');
}
box(0, 995, 1916, 2, '#fff');
box(0, 996, 1920, 1, '#000');

// Price axis
const label = (x, y, text, cls = 'axis') => add('text', { x, y, class: cls }, text);
['1.26335', '1.26055', '1.25780', '1.25500', '1.25225', '1.24945', '1.24670', '1.24390', '1.24115', '1.23835',
  '1.23560', '1.23280', '1.23005', '1.22725', '1.22450', '1.22170', '1.21895', '1.21615', '1.21340']
  .forEach((price, i) => {
    box(1872, 109 + 33 * i, 3, 1, '#fff');
    label(1877, 113 + 33 * i, price);
  });
box(1873, 175, 41, 11, '#fff');
label(1877, 184, '1.25738', 'axis now');
for (const y of [715, 849]) {
  label(1875, y + 4, '1.05');
  label(1877, y + 123, '0.05');
  label(1874, y + 123, '-0.05');
}

// Time axis
['14 Mar 2017', '15 Mar 07:00', '15 Mar 15:00', '15 Mar 23:00', '16 Mar 07:00', '16 Mar 15:00', '16 Mar 23:00',
  '17 Mar 07:00', '17 Mar 15:00', '20 Mar 00:00', '20 Mar 08:00', '20 Mar 16:00', '21 Mar 00:00', '21 Mar 08:00',
  '21 Mar 16:00', '22 Mar 00:00', '22 Mar 08:00', '22 Mar 16:00', '23 Mar 00:00', '23 Mar 08:00', '23 Mar 16:00',
  '24 Mar 00:00', '24 Mar 08:00', '24 Mar 16:00', '27 Mar 01:00', '27 Mar 09:00', '27 Mar 17:00']
  .forEach((time, i) => {
    box(5 + 64 * i, 975, 1, 3, '#fff');
    label(4 + 64 * i, 987, time);
  });

// Captions
add('path', { d: 'M8 112l4-4 4 4z', fill: '#fff' });
label(20, 113, 'GBPUSD,H1\u00a0 1.25910 1.25961 1.25647 1.25738');
label(9, 721, 'GRAAL1 0.0000 1.0000');
label(9, 855, 'GRAAL 0.0000 1.0000');

// Hand-drawn notes
const stroke = (points, cls = 'pen') => add('polyline', { points, class: cls });
stroke('82,685 110,672 137,663 153,662 180,655 192,647 213,620 230,605 247,597 307,597 337,587 360,577 380,563 388,543 405,517 415,508 437,503 470,493 572,493 587,487 606,478 625,468 644,457 664,453 688,453 694,458 705,463', 'marker');
add('ellipse', { cx: 85, cy: 752, rx: 18, ry: 240, class: 'marker ring' });
stroke('122,570 122,561 127,550 131,537 130,521 135,535 138,550 139,586');
stroke('138,692 135,685 137,678 150,678 159,688 159,698 155,704 133,715 118,725 114,733 115,742 121,754 136,754 142,743 155,743 162,755 183,756 197,751 198,747');
stroke('120,883 120,861 140,861 146,870 145,877 137,881 131,889 142,889 153,893 166,905 166,922 155,935 140,935 130,928 128,924');
stroke('710,361 711,370 711,420 708,447 705,467 705,507 702,517 702,597 705,620 708,650 717,697 718,733 723,767 730,790 743,810 762,821 777,821 788,807 795,785 808,757 814,740 816,713 820,680 821,623 823,620 823,538 819,520 819,398 816,373 808,355 790,347 763,333 745,333 730,345 720,363 711,378');
stroke('737,396 763,368 772,355 774,345 768,367 767,383 762,400 753,425');
stroke('734,661 732,653 732,622 741,616 753,616 760,625 769,648 760,663 741,674 741,687 745,690 763,691 787,696 794,696 803,685');
stroke('831,468 825,457 825,440 832,414 857,417 880,425 885,432 885,453 877,468 867,476 850,476 837,468 828,457 828,443 833,423 838,420');
stroke('854,453 884,446 904,439 922,428 932,415 947,385 957,368 974,357 993,353 1016,351 1029,348 1046,348 1052,354 1065,359 1081,363 1131,363 1149,356 1177,343 1202,328 1231,313 1257,306 1272,304 1295,304 1306,308 1359,308 1379,299 1391,290 1391,302 1397,305 1405,306 1413,308 1457,308 1492,283 1492,257 1484,246 1473,238 1460,234 1443,232 1411,232 1400,240 1392,250 1385,261 1382,273 1382,300 1393,309 1407,324');
stroke('1540,217 1557,221 1587,232 1597,243 1597,272 1583,283 1567,283 1558,270 1558,235 1564,233 1564,238 1564,230 1567,226');
stroke('1598,255 1608,245 1618,235 1622,224 1629,213 1645,206 1673,206 1685,193 1691,184 1697,178 1709,175 1720,173');
label(209, 697, 'ВХОД', 'note');
label(638, 560, 'ВЫХОД', 'note');
```
